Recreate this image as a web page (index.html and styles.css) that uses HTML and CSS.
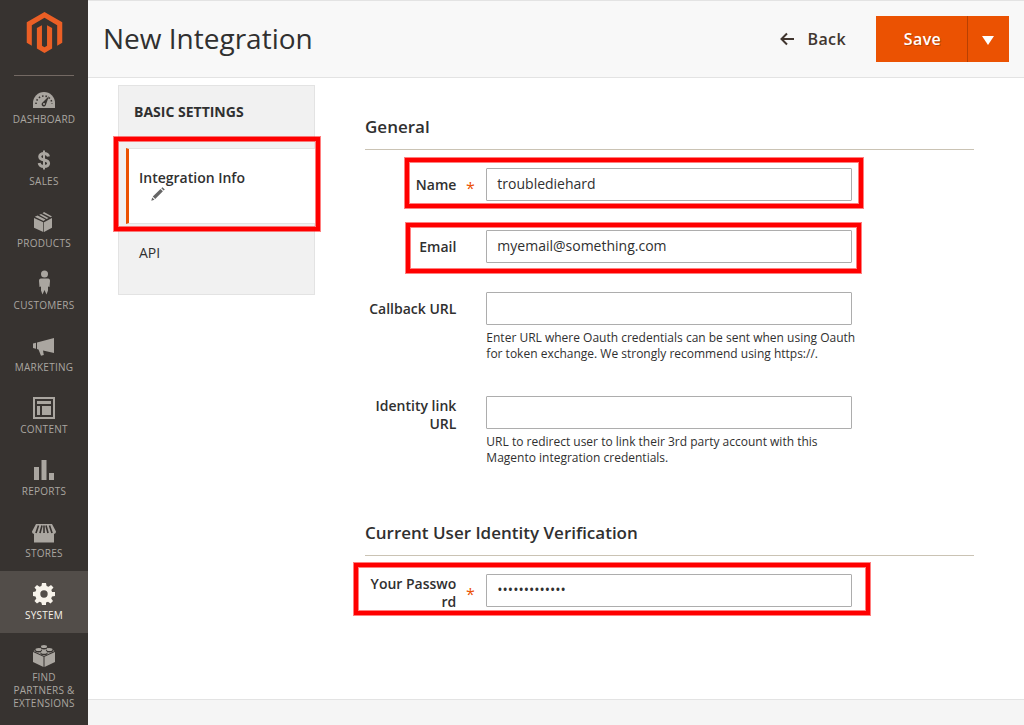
FILE: index.html
```html
<!DOCTYPE html>
<html lang="en">
<head>
<meta charset="utf-8">
<meta name="viewport" content="width=device-width, initial-scale=1">
<title>New Integration</title>
<link rel="stylesheet" href="styles.css">
</head>
<body>
<div class="app">
  <nav class="menu" aria-label="Main menu">
    <a class="logo" href="#" aria-label="Home">
      <svg width="41" height="41" viewBox="0 0 24 24"><path fill="#eb5f25" d="M12 24l-4.455-2.572v-12l2.97-1.715v12.001l1.485.902 1.485-.902V7.713l2.971 1.715v12L12 24zM22.391 6v12l-2.969 1.714V7.713L12 3.43 4.574 7.713v12.001L1.609 18V6L12 0l10.391 6z"/></svg>
    </a>
    <ul class="menu-list">
      <li><a class="menu-item" href="#">
        <svg viewBox="0 0 24 24"><path d="M1 22v-5a11 11 0 0 1 22 0v5z"/><path class="cut-line" stroke-width="1.6" stroke-dasharray="1.5 2" fill="none" d="M4 18a8 8 0 0 1 16 0"/><path class="cut" d="M17 10l-3 8.500a2.200 2.200 0 1 1-3.500-2z"/><circle cx="12" cy="18" r="1"/></svg>
        <span>DASHBOARD</span></a></li>
      <li><a class="menu-item" href="#">
        <svg viewBox="0 0 24 24"><path class="line" stroke-width="3" d="M16.500 8.500C16 6.500 14.500 5.500 12 5.500c-2.700 0-4.300 1.200-4.300 3.200 0 4.600 8.900 2 8.900 6.600 0 2-1.700 3.200-4.600 3.200-2.800 0-4.500-1.300-4.800-3.500"/><path d="M11 2.500h2v19h-2z"/></svg>
        <span>SALES</span></a></li>
      <li><a class="menu-item" href="#">
        <svg viewBox="0 0 24 24"><path d="M2 8l9.300 4.300V22L2 17.700zM20 8l-8 4.300V22l8-4.300zM2.800 6.700L5.500 5.500l8 4L11.500 10.900zM7.200 4.800L9 3.900l7.500 4-1.800 1zM10.500 3.200L12 2l8 4.500-1.500.7z"/></svg>
        <span>PRODUCTS</span></a></li>
      <li><a class="menu-item" href="#">
        <svg viewBox="0 0 24 24"><circle cx="12.500" cy="2" r="3.500"/><path d="M9 6.500h7c1.500 0 2 1 2 2.500l-.5 6-1.500-.5v4l-1.500 4-2-4.500-2 4.500L9 18.500v-4l-1.500.5L7 9c0-1.500.5-2.500 2-2.500z"/></svg>
        <span>CUSTOMERS</span></a></li>
      <li><a class="menu-item" href="#">
        <svg viewBox="0 0 24 24"><path d="M1 9.500l3-.8v6l-3-.7zM5 8.500L22 4v15l-11-2.500.8 4.500-2.800.8L6.500 15.500 5 15z"/></svg>
        <span>MARKETING</span></a></li>
      <li><a class="menu-item" href="#">
        <svg viewBox="0 0 24 24"><path fill-rule="evenodd" d="M1 1h22v22H1zM3 3v18h18V3z"/><path d="M5 5h14v3H5zM5 10h3v9H5zM10 10h9v9h-9z"/></svg>
        <span>CONTENT</span></a></li>
      <li><a class="menu-item" href="#">
        <svg viewBox="0 0 24 24"><path d="M2 9h5v13H2zM9.500 2h5v20h-5zM17 15h5v7h-5z"/></svg>
        <span>REPORTS</span></a></li>
      <li><a class="menu-item" href="#">
        <svg viewBox="0 0 24 24"><path d="M2 13h20v9.500H2z"/><path d="M4 4h16l4 7.500c0 3-3.500 3-4 .5-.5 2.500-4 2.500-4 0-.5 2.500-4 2.500-4 0 0 2.500-3.500 2.500-4 0-.5 2.500-4 2.500-4 0C3.500 14.500 0 14.500 0 11.500z"/><path class="cut-line" stroke-width="1.600" fill="none" d="M6.500 5.500L4 13M10 5.500L8 13M14 5.500l2 7.500M17.500 5.500L20 13M12 5.500V13"/></svg>
        <span>STORES</span></a></li>
      <li><a class="menu-item active" href="#" aria-current="page">
        <svg viewBox="0 0 24 24"><path fill-rule="evenodd" d="M10 1h4l.6 3 1.900.8 2.500-1.700L21.500 5.500 19.300 8l.8 1.900L23 10v4l-3 .6-.8 1.900 1.800 2.500-2.500 2.500-2.500-1.800-2 .8L14 23h-4l-.6-2.500-1.900-.8L5 21.500 2.500 19l1.800-2.500-.8-1.900L1 14v-4l2.500-.4.8-1.900L2.500 5.500 5 3l2.500 1.700 1.900-.8zM12 8.300a3.700 3.700 0 1 0 0 7.400 3.700 3.700 0 0 0 0-7.400z"/></svg>
        <span>SYSTEM</span></a></li>
      <li><a class="menu-item" href="#">
        <svg viewBox="0 0 24 24"><path d="M1 8l10.500 4.800V23L1 18zM23 8l-10.500 4.800V23L23 18zM1.500 7L12 2.200 22.500 7 12 12z"/><g class="cut"><ellipse cx="12" cy="3.600" rx="3.600" ry="1.900"/><ellipse cx="6.500" cy="6.600" rx="3.600" ry="1.900"/><ellipse cx="17.500" cy="6.600" rx="3.600" ry="1.900"/><ellipse cx="12" cy="9.300" rx="3.600" ry="1.900"/></g><ellipse cx="12" cy="2.500" rx="3" ry="1.500"/><ellipse cx="6.500" cy="5.500" rx="3" ry="1.500"/><ellipse cx="17.500" cy="5.500" rx="3" ry="1.500"/><ellipse cx="12" cy="8.200" rx="3" ry="1.500"/></svg>
        <span>FIND PARTNERS &amp; EXTENSIONS</span></a></li>
    </ul>
  </nav>

  <div class="page">
    <header class="page-header">
      <h1>New Integration</h1>
      <div class="actions">
        <button class="back" type="button"><svg width="16" height="14" viewBox="0 0 16 14"><path d="M15 7H2.500M8 1.500L2.500 7 8 12.500"/></svg>Back</button>
        <div class="split">
          <button class="save" type="submit" form="integration">Save</button>
          <button class="toggle" type="button" aria-label="More save options"><svg width="12" height="9" viewBox="0 0 12 9"><path d="M0 0h12L6 9z"/></svg></button>
        </div>
      </div>
    </header>

    <main class="content">
      <aside class="tabs">
        <h2>BASIC SETTINGS</h2>
        <ul>
          <li class="tab-row current marked mark-tab"><a class="tab" href="#" aria-current="true">Integration Info
            <svg width="14" height="14" viewBox="0 0 14 14"><path d="M1.800 9.500L9.500 2l2.400 2.300-7.700 7.700zM10.300 1.300L11.500.2 13.800 2.400l-1.200 1.200zM1.200 10.400l2.300 2.300L.3 13.700z"/></svg></a></li>
          <li class="tab-row"><a class="tab" href="#">API</a></li>
        </ul>
      </aside>

      <form class="form" id="integration">
        <fieldset class="group">
          <legend>General</legend>
          <div class="field marked mark-name">
            <label for="name">Name</label><span class="required">*</span>
            <div class="control"><input id="name" type="text" value="troublediehard" required></div>
          </div>
          <div class="field marked mark-email">
            <label for="email">Email</label>
            <div class="control"><input id="email" type="text" value="myemail@something.com"></div>
          </div>
          <div class="field">
            <label for="callback">Callback URL</label>
            <div class="control"><input id="callback" type="text" aria-describedby="callback-note">
              <p class="note" id="callback-note">Enter URL where Oauth credentials can be sent when using Oauth for token exchange. We strongly recommend using https://.</p></div>
          </div>
          <div class="field two-line">
            <label for="identity">Identity link URL</label>
            <div class="control"><input id="identity" type="text" aria-describedby="identity-note">
              <p class="note" id="identity-note">URL to redirect user to link their 3rd party account with this Magento integration credentials.</p></div>
          </div>
        </fieldset>
        <fieldset class="group">
          <legend>Current User Identity Verification</legend>
          <div class="field two-line marked mark-password">
            <label for="password">Your&nbsp;Password</label><span class="required">*</span>
            <div class="control"><input id="password" type="password" value="magentoadmin1" required></div>
          </div>
        </fieldset>
      </form>
    </main>
    <footer class="footer"></footer>
  </div>
</div>
</body>
</html>
```
FILE: styles.css
```css
* { box-sizing: border-box; }

body {
  margin: 0;
  background: #fff;
  color: #303030;
  font: 14px/18px "Open Sans", "Noto Sans", sans-serif;
}

h1, h2, ul, p { margin: 0; padding: 0; }
ul { list-style: none; }
a { color: inherit; text-decoration: none; }
button, input { font: inherit; color: inherit; }

.app { display: flex; min-height: 100vh; }

/* Main menu */
.menu { flex: none; width: 88px; background: #373330; color: #aaa6a0; }
.logo {
  display: flex;
  justify-content: center;
  height: 76px;
  margin: 0 14px;
  padding-top: 12px;
  border-bottom: 1px solid #736963;
}
.menu-list { margin-top: -1px; }
.menu-item {
  display: flex;
  flex-direction: column;
  align-items: center;
  gap: 3px;
  min-height: 62px;
  padding: 11px 8px 8px;
  font-size: 10px;
  line-height: 13px;
  letter-spacing: 0.025em;
  text-align: center;
}
.menu-item svg { width: 24px; height: 24px; overflow: visible; fill: #aaa6a0; }
.menu-item .cut { fill: #373330; }
.menu-item .cut-line { stroke: #373330; }
.menu-item .line { fill: none; stroke: #aaa6a0; }
.menu-item.active { background: #524d49; color: #f7f3eb; }
.menu-item.active svg { fill: #f7f3eb; }

/* Page header */
.page { display: flex; flex-direction: column; flex: 1; min-width: 0; }
.page-header {
  display: flex;
  align-items: center;
  justify-content: space-between;
  height: 78px;
  padding: 0 15px;
  background: #f8f8f8;
  border: solid #e3e3e3;
  border-width: 1px 0;
}
h1 { padding-bottom: 2px; font-size: 28px; font-weight: 400; line-height: 36px; }
.actions { display: flex; align-items: center; gap: 30px; }
.actions button { border: 0; cursor: pointer; font-size: 16px; font-weight: 600; letter-spacing: 0.025em; }
.back { display: flex; align-items: center; gap: 12px; padding: 0; background: none; color: #41362f; }
.back svg { fill: none; stroke: #41362f; stroke-width: 2; }
.split { display: flex; height: 46px; }
.actions .save {
  width: 91px;
  padding: 0 0 0 2px;
  background: #eb5202;
  color: #fff;
  text-shadow: 1px 1px 0 rgba(0, 0, 0, 0.25);
}
.actions .toggle {
  width: 42px;
  padding: 0 2px 0 0;
  background: #eb5202;
  border-left: 1px solid #b84002;
}
.toggle svg { fill: #fff; }

/* Content */
.content { display: flex; align-items: flex-start; flex: 1; gap: 50px; padding: 7px 50px 0 30px; }
.tabs {
  flex: none;
  width: 197px;
  min-height: 210px;
  background: #f1f1f1;
  border: 1px solid #e3e3e3;
}
.tabs h2 { padding: 17px 15px 27px; font-size: 14px; font-weight: 700; line-height: 18px; }
.tab-row { margin-left: 7px; }
.tab { display: block; padding: 20px 50px 20px 13px; }
.current { margin-right: -1px; }
.current .tab {
  min-height: 76px;
  border: solid #e3e3e3;
  border-width: 1px 0;
  border-left: 3px solid #eb5202;
  padding-left: 10px;
  background: #fff;
  font-weight: 600;
}
.current svg { display: block; margin-left: 12px; fill: #666; }

.form { flex: 1; min-width: 0; padding-top: 31px; }
.group { margin: 0 0 22px; padding: 0; border: 0; min-width: 0; }
legend {
  width: 100%;
  margin-bottom: 18px;
  padding: 0 0 11px;
  border-bottom: 1px solid #cac3b4;
  font-size: 17px;
  font-weight: 600;
  line-height: 22px;
}
.field {
  display: grid;
  grid-template-columns: 15% 30px 60%;
  margin-bottom: 29px;
}
.field label { padding-top: 8px; font-weight: 600; text-align: right; overflow-wrap: anywhere; }
.two-line label { padding-top: 1px; }
.required { padding: 11px 2px 0 0; color: #eb5202; font-size: 16px; text-align: center; }
.control { grid-column: 3; }
.control input {
  display: block;
  width: 100%;
  height: 33px;
  padding: 0 10px 2px;
  background: #fff;
  border: 1px solid #adadad;
  border-radius: 1px;
}
.note { margin: 5px -10px 5px 0; font-size: 12px; line-height: 16px; }

/* Red call-out frames drawn over rows */
.marked { position: relative; }
.marked::after {
  content: "";
  position: absolute;
  border: 4px solid #f00;
  box-shadow: 0 0 0 1px rgba(255, 0, 0, 0.5), inset 0 0 0 1px rgba(255, 0, 0, 0.5);
  pointer-events: none;
}
.mark-tab::after { inset: -11px -5px -7px -12px; }
.mark-name::after { inset: -10px 111px -7px 40px; }
.mark-email::after { inset: -7px 113px -10px 41px; }
.mark-password::after { inset: -11px 104px -4px -11px; }

.footer { height: 26px; background: #f5f5f5; border-top: 1px solid #e3e3e3; }
```
